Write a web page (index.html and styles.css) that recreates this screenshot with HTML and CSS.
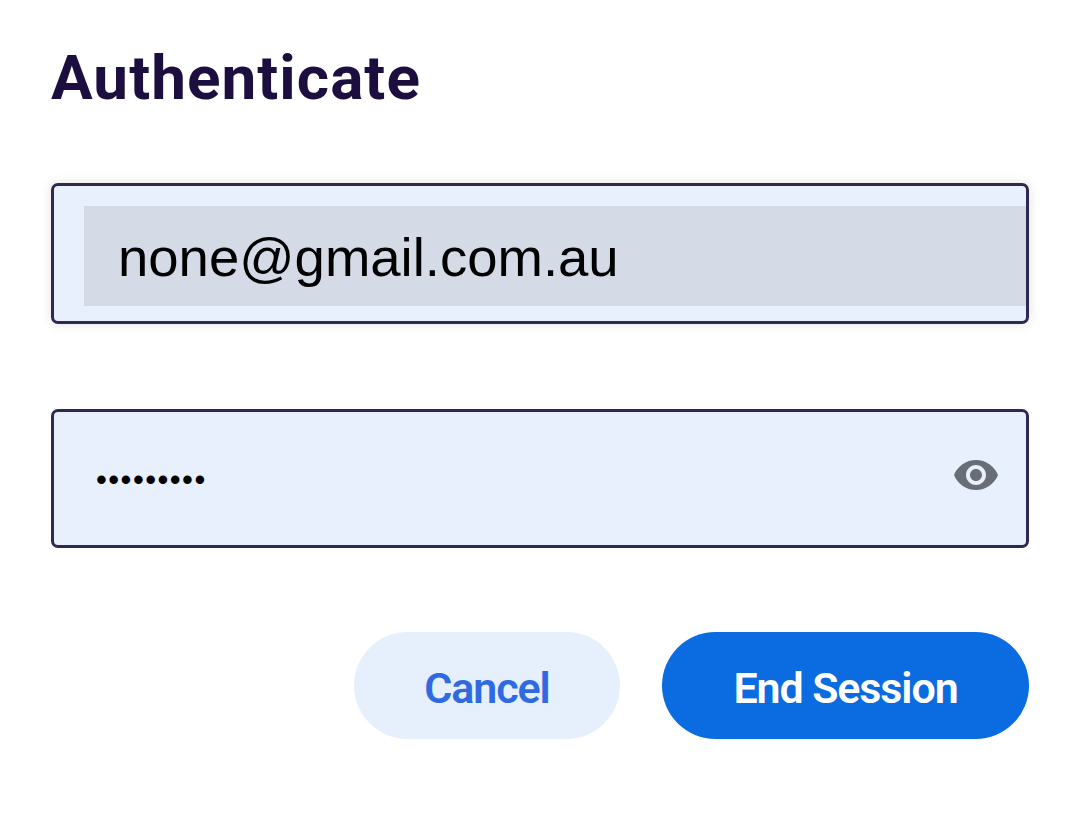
FILE: index.html
```html
<!DOCTYPE html>
<html lang="en">
<head>
<meta charset="utf-8">
<title>Authenticate</title>
<link rel="stylesheet" href="styles.css">
</head>
<body>
<main class="dialog">
  <h1 class="title">Authenticate</h1>
  <div class="field field-email">
    <div class="autofill">none@gmail.com.au</div>
  </div>
  <div class="field field-password">
    <span class="dots">•••••••••</span>
    <svg class="eye" viewBox="0 0 24 24" aria-hidden="true"><path d="M12 4.5C7 4.5 2.73 7.61 1 12c1.73 4.39 6 7.5 11 7.5s9.27-3.11 11-7.5c-1.73-4.39-6-7.5-11-7.5zM12 17c-2.76 0-5-2.24-5-5s2.24-5 5-5 5 2.24 5 5-2.24 5-5 5zm0-8c-1.66 0-3 1.34-3 3s1.34 3 3 3 3-1.34 3-3-1.34-3-3-3z"/></svg>
  </div>
  <div class="actions">
    <button class="btn btn-cancel">Cancel</button>
    <button class="btn btn-primary">End Session</button>
  </div>
</main>
</body>
</html>
```

FILE: styles.css
```css
* { box-sizing: border-box; }
html, body { margin: 0; background: #fff; }
body { width: 1072px; height: 819px; overflow: hidden; }
.dialog { padding: 40px 43px 0 51px; }
.title {
  margin: 0 0 68px;
  height: 75px;
  font: 700 62px/75px Roboto, sans-serif;
  letter-spacing: 1.05px;
  color: #1c0f3f;
  white-space: nowrap;
}
.field {
  display: flex;
  border: 3px solid #2f2850;
  border-radius: 7px;
  background: #e8f0fe;
}
.field-email {
  height: 141px;
  padding: 20px 0 15px 30px;
  margin-bottom: 85px;
  box-shadow: 0 0 12px rgba(0, 0, 0, 0.12);
}
.autofill {
  flex: 1;
  height: 100px;
  padding-left: 34px;
  background: #d5dbe6;
  font: 54.5px/103px "Liberation Sans", Arial, sans-serif;
  color: #000;
  overflow: hidden;
}
.field-password {
  height: 139px;
  padding: 0 26px 0 42px;
  align-items: center;
  justify-content: space-between;
  margin-bottom: 84px;
}
.dots {
  font: 31px/1 "Liberation Sans", Arial, sans-serif;
  letter-spacing: 1.45px;
  color: #000;
  margin-top: 2px;
}
.eye { width: 48px; height: 48px; fill: #696d76; margin-top: -7px; }
.actions { display: flex; justify-content: flex-end; gap: 42px; }
.btn {
  height: 107px;
  border: 0;
  border-radius: 54px;
  padding: 5px 0 0;
  font: 600 43px/1 Roboto, sans-serif;
  letter-spacing: -1.1px;
}
.btn-cancel { width: 266px; background: #e6effc; color: #2e6ae2; }
.btn-primary { width: 367px; background: #0b6be0; color: #fff; }
```
